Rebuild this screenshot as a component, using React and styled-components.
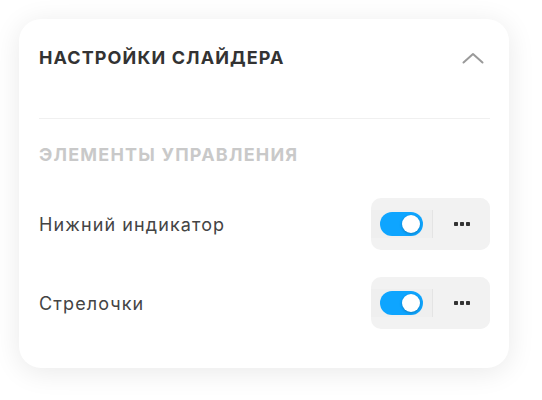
import React, { useState } from 'react';
import styled, { createGlobalStyle } from 'styled-components';

const GlobalStyle = createGlobalStyle`
  html, body {
    margin: 0;
    padding: 0;
    background: #fff;
    font-family: Inter, "Noto Sans", sans-serif;
  }
`;

const Page = styled.div`
  padding: 19px 33px 32px 19px;
`;

const Card = styled.div`
  width: 490px;
  box-sizing: border-box;
  padding: 20px 19px 39px 20px;
  background: #fff;
  border-radius: 22px;
  box-shadow: 0 4px 28px rgba(0, 0, 0, 0.09);
`;

const Header = styled.div`
  height: 38px;
  display: flex;
  align-items: center;
  justify-content: space-between;
`;

const Title = styled.h2`
  margin: 0;
  font-size: 18px;
  line-height: 22px;
  font-weight: 700;
  color: #333;
  letter-spacing: 1.1px;
`;

const Chevron = styled.button`
  border: none;
  background: none;
  padding: 0;
  margin-right: 5px;
  width: 24px;
  height: 24px;
  display: flex;
  align-items: center;
  justify-content: center;
  cursor: pointer;
`;

const Divider = styled.div`
  height: 1px;
  background: #f0f0f0;
  margin-top: 41px;
`;

const SectionLabel = styled.div`
  margin-top: 25px;
  font-size: 18px;
  line-height: 22px;
  font-weight: 700;
  letter-spacing: 1.2px;
  color: #c9c9c9;
`;

const List = styled.div`
  margin-top: 32px;
  display: flex;
  flex-direction: column;
  gap: 27px;
`;

const Row = styled.div`
  display: flex;
  align-items: center;
  justify-content: space-between;
  height: 52px;
`;

const RowLabel = styled.span`
  font-size: 18px;
  letter-spacing: 1.1px;
  color: #444;
`;

const Controls = styled.div`
  display: flex;
  align-items: stretch;
  width: 119px;
  height: 52px;
  border-radius: 10px;
  background: #f2f2f2;
  overflow: hidden;
`;

const ToggleCell = styled.div`
  display: flex;
  align-items: center;
  padding: 0 9px;
  border-right: 1px solid #e4e4e4;
  margin: 12px 0;
  background: #efefef;
`;

const Track = styled.button`
  position: relative;
  width: 43px;
  height: 24px;
  border: none;
  padding: 0;
  border-radius: 12px;
  background: ${p => (p.$on ? '#0ea5ff' : '#cfcfcf')};
  cursor: pointer;
`;

const Knob = styled.span`
  position: absolute;
  top: 3px;
  left: ${p => (p.$on ? '22px' : '3px')};
  width: 18px;
  height: 18px;
  border-radius: 50%;
  background: #fff;
  box-shadow: 0 1px 3px rgba(0, 0, 0, 0.25);
`;

const MoreButton = styled.button`
  flex: 1;
  border: none;
  background: #f2f2f2;
  display: flex;
  align-items: center;
  justify-content: center;
  cursor: pointer;
  padding: 0;
`;

const Dots = () => (
  <svg width="16" height="4" viewBox="0 0 16 4">
    <rect x="0" y="0" width="4" height="4" rx="0.8" fill="#333" />
    <rect x="6" y="0" width="4" height="4" rx="0.8" fill="#333" />
    <rect x="12" y="0" width="4" height="4" rx="0.8" fill="#333" />
  </svg>
);

const Setting = ({ label }) => {
  const [on, setOn] = useState(true);
  return (
    <Row>
      <RowLabel>{label}</RowLabel>
      <Controls>
        <ToggleCell>
          <Track $on={on} onClick={() => setOn(v => !v)}>
            <Knob $on={on} />
          </Track>
        </ToggleCell>
        <MoreButton aria-label="Ещё">
          <Dots />
        </MoreButton>
      </Controls>
    </Row>
  );
};

export default function App() {
  return (
    <>
      <GlobalStyle />
      <Page>
        <Card>
          <Header>
            <Title>НАСТРОЙКИ СЛАЙДЕРА</Title>
            <Chevron aria-label="Свернуть">
              <svg width="22" height="12" viewBox="0 0 22 12">
                <path d="M1.5 10.5 L11 2 L20.5 10.5" fill="none" stroke="#9a9a9a" strokeWidth="2" strokeLinecap="round" strokeLinejoin="round" />
              </svg>
            </Chevron>
          </Header>
          <Divider />
          <SectionLabel>ЭЛЕМЕНТЫ УПРАВЛЕНИЯ</SectionLabel>
          <List>
            <Setting label="Нижний индикатор" />
            <Setting label="Стрелочки" />
          </List>
        </Card>
      </Page>
    </>
  );
}
